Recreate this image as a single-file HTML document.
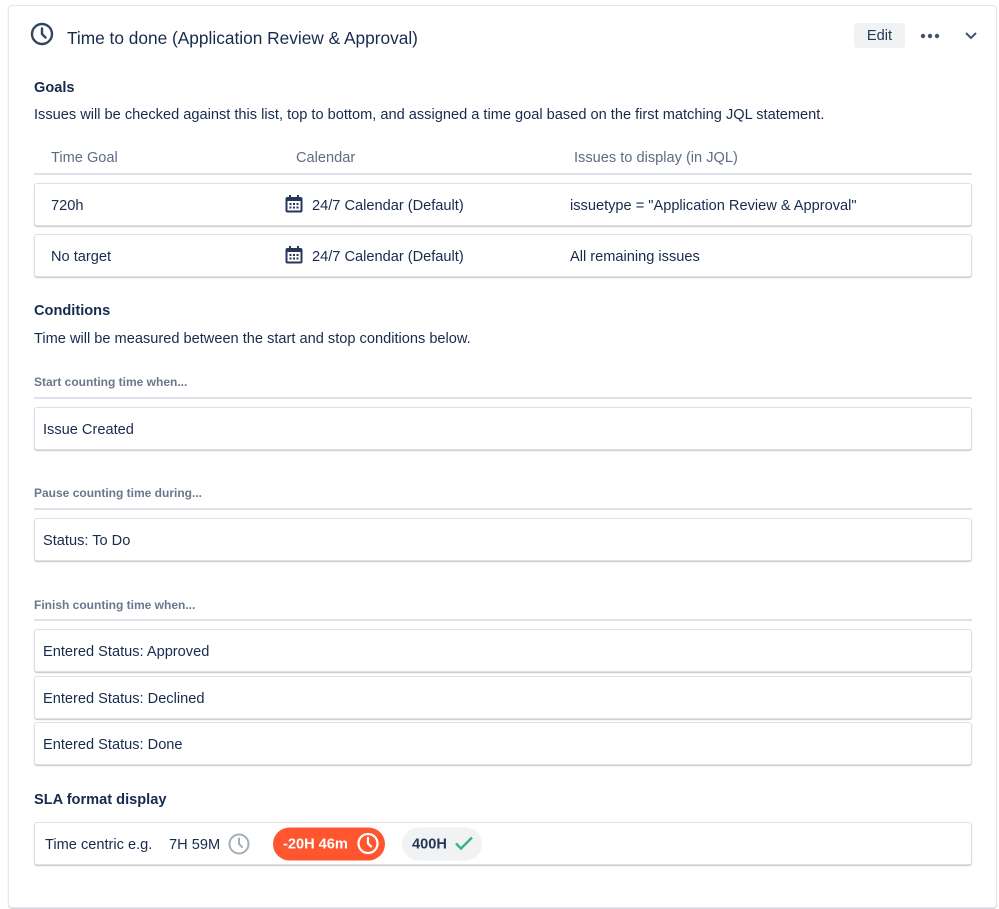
<!DOCTYPE html>
<html><head><meta charset="utf-8"><style>
*{box-sizing:border-box;margin:0;padding:0}
body{width:999px;height:909px;background:#fff;font-family:"Liberation Sans",Arial,sans-serif;color:#172b4d;position:relative;overflow:hidden}
svg{display:block}
.card{position:absolute;left:8px;top:5px;width:989px;height:903px;border:1px solid #e4e6ea;border-radius:4px;box-shadow:0 1px 1px rgba(9,30,66,.2)}
.a{position:absolute;white-space:nowrap}
.t{font-size:14.6px;line-height:18px}
.h{font-size:14.6px;font-weight:bold;line-height:18px}
.s{font-size:12px;font-weight:bold;color:#6b778c;line-height:16px}
.line{position:absolute;left:34px;width:938px;height:2px;background:#dfe1e6}
.box{position:absolute;left:34px;width:938px;border:1px solid #dfe1e6;border-radius:3px;box-shadow:0 1px 1px rgba(9,30,66,.25);background:#fff}
.box span{position:absolute;top:50%;transform:translateY(-50%);font-size:14.6px;white-space:nowrap;margin-top:1px}
.gray{color:#5e6c84}
</style></head><body>
<div class="card"></div>
<svg class="a" style="left:30px;top:22px" width="24" height="24" viewBox="0 0 24 24"><circle cx="12" cy="12" r="10" fill="none" stroke="#344563" stroke-width="2.4"/><path d="M12 6.5V12l3.5 3.5" fill="none" stroke="#344563" stroke-width="2.4" stroke-linecap="round"/></svg>
<div class="a" style="left:67px;top:28px;font-size:17.3px;line-height:20px;color:#172b4d">Time to done (Application Review &amp; Approval)</div>
<div class="a" style="left:854px;top:23px;width:51px;height:25px;background:#f1f2f4;border-radius:3px;font-size:14.6px;line-height:27px;text-align:center;color:#253858">Edit</div>
<svg class="a" style="left:920px;top:33px" width="22" height="6"><circle cx="3" cy="3" r="2.2" fill="#42526e"/><circle cx="10" cy="3" r="2.2" fill="#42526e"/><circle cx="17" cy="3" r="2.2" fill="#42526e"/></svg>
<svg class="a" style="left:964px;top:31px" width="14" height="10"><path d="M2 2l5 5 5-5" fill="none" stroke="#42526e" stroke-width="2"/></svg>

<div class="a h" style="left:34px;top:79px">Goals</div>
<div class="a t" style="left:34px;top:106px">Issues will be checked against this list, top to bottom, and assigned a time goal based on the first matching JQL statement.</div>
<div class="a t gray" style="left:51px;top:149px">Time Goal</div>
<div class="a t gray" style="left:296px;top:149px">Calendar</div>
<div class="a t gray" style="left:574px;top:149px">Issues to display (in JQL)</div>
<div class="line" style="top:173px"></div>
<div class="box" style="top:183px;height:43px"><span style="left:16px">720h</span><span style="left:249px;margin-top:-1px"><svg width="20" height="20" viewBox="0 0 20 20"><rect x="1.5" y="3" width="17" height="15.5" rx="2" fill="#253858"/><rect x="3.5" y="7" width="13" height="9.5" fill="#fff"/><rect x="5" y="1" width="2" height="4" fill="#253858"/><rect x="13" y="1" width="2" height="4" fill="#253858"/><g fill="#253858"><rect x="5.5" y="9" width="2" height="2"/><rect x="9" y="9" width="2" height="2"/><rect x="12.5" y="9" width="2" height="2"/><rect x="5.5" y="12.5" width="2" height="2"/><rect x="9" y="12.5" width="2" height="2"/><rect x="12.5" y="12.5" width="2" height="2"/></g></svg></span><span style="left:277px">24/7 Calendar (Default)</span><span style="left:535px">issuetype = "Application Review &amp; Approval"</span></div>
<div class="box" style="top:234px;height:43px"><span style="left:16px">No target</span><span style="left:249px;margin-top:-1px"><svg width="20" height="20" viewBox="0 0 20 20"><rect x="1.5" y="3" width="17" height="15.5" rx="2" fill="#253858"/><rect x="3.5" y="7" width="13" height="9.5" fill="#fff"/><rect x="5" y="1" width="2" height="4" fill="#253858"/><rect x="13" y="1" width="2" height="4" fill="#253858"/><g fill="#253858"><rect x="5.5" y="9" width="2" height="2"/><rect x="9" y="9" width="2" height="2"/><rect x="12.5" y="9" width="2" height="2"/><rect x="5.5" y="12.5" width="2" height="2"/><rect x="9" y="12.5" width="2" height="2"/><rect x="12.5" y="12.5" width="2" height="2"/></g></svg></span><span style="left:277px">24/7 Calendar (Default)</span><span style="left:535px">All remaining issues</span></div>

<div class="a h" style="left:34px;top:302px">Conditions</div>
<div class="a t" style="left:34px;top:330px">Time will be measured between the start and stop conditions below.</div>
<div class="a s" style="left:34px;top:374px">Start counting time when...</div>
<div class="line" style="top:397px"></div>
<div class="box" style="top:407px;height:43px"><span style="left:8px">Issue Created</span></div>
<div class="a s" style="left:34px;top:485px">Pause counting time during...</div>
<div class="line" style="top:508px"></div>
<div class="box" style="top:518px;height:43px"><span style="left:8px">Status: To Do</span></div>
<div class="a s" style="left:34px;top:597px">Finish counting time when...</div>
<div class="line" style="top:619px"></div>
<div class="box" style="top:629px;height:43px"><span style="left:8px">Entered Status: Approved</span></div>
<div class="box" style="top:676px;height:43px"><span style="left:8px">Entered Status: Declined</span></div>
<div class="box" style="top:722px;height:43px"><span style="left:8px">Entered Status: Done</span></div>

<div class="a h" style="left:34px;top:791px">SLA format display</div>
<div class="box" style="top:822px;height:43px">
<span style="left:10px">Time centric e.g.</span>
<span style="left:134px">7H 59M</span>
<span style="left:193px;height:22px;margin-top:0"><svg width="22" height="22" viewBox="0 0 22 22"><circle cx="11" cy="11" r="9.5" fill="none" stroke="#a5adba" stroke-width="2"/><path d="M11 5.5V11l3 3" fill="none" stroke="#a5adba" stroke-width="2" stroke-linecap="round"/></svg></span>
<span style="left:238px;height:33px;width:112px;background:#ff5630;border-radius:17px;color:#fff;font-weight:bold;line-height:35px;padding-left:10px;margin-top:0">-20H 46m<svg width="22" height="22" viewBox="0 0 22 22" style="position:absolute;left:84px;top:5px"><circle cx="11" cy="11" r="9.5" fill="none" stroke="#fff" stroke-width="2.2"/><path d="M11 5.5V11l3 3" fill="none" stroke="#fff" stroke-width="2.2" stroke-linecap="round"/></svg></span>
<span style="left:367px;height:33px;width:80px;background:#f1f2f4;border-radius:17px;color:#253858;font-weight:bold;line-height:35px;padding-left:10px;margin-top:0">400H<svg width="20" height="16" viewBox="0 0 20 16" style="position:absolute;left:52px;top:8px"><path d="M2 8l5 5 11-11" fill="none" stroke="#36b37e" stroke-width="2.4"/></svg></span>
</div>
</body></html>
